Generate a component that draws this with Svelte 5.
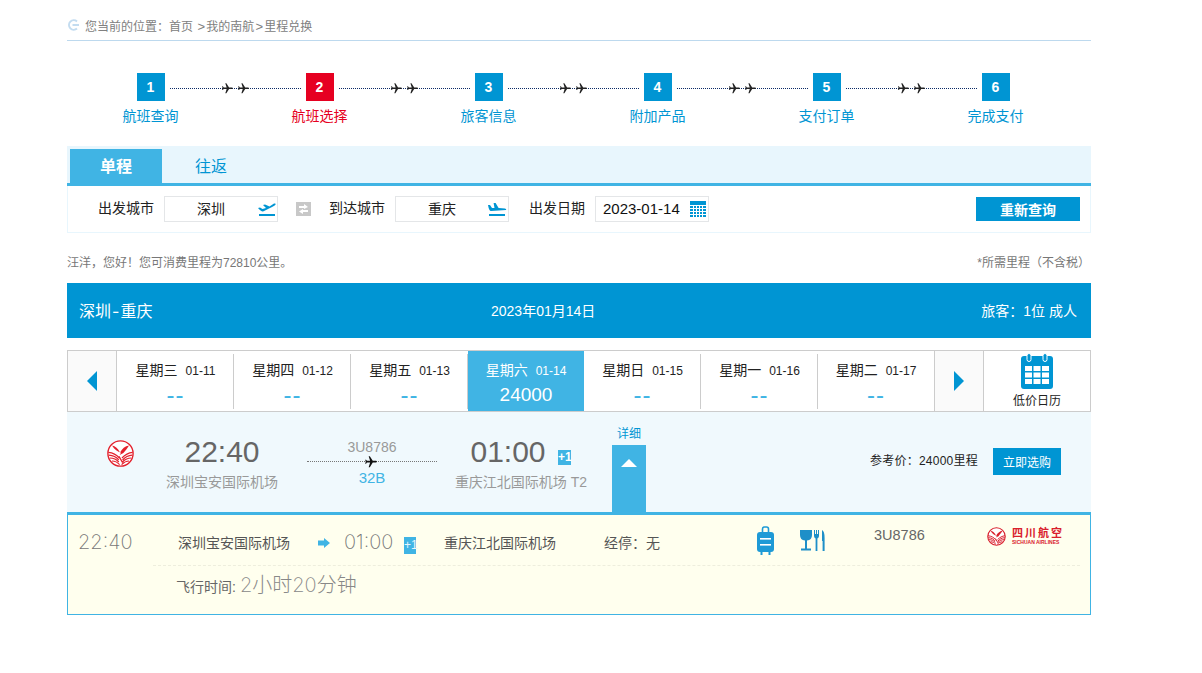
<script>
	const steps = [
		{ n: 1, label: '航班查询' },
		{ n: 2, label: '航班选择', active: true },
		{ n: 3, label: '旅客信息' },
		{ n: 4, label: '附加产品' },
		{ n: 5, label: '支付订单' },
		{ n: 6, label: '完成支付' }
	];
	const days = [
		{ week: '星期三', date: '01-11', price: '--' },
		{ week: '星期四', date: '01-12', price: '--' },
		{ week: '星期五', date: '01-13', price: '--' },
		{ week: '星期六', date: '01-14', price: '24000', active: true },
		{ week: '星期日', date: '01-15', price: '--' },
		{ week: '星期一', date: '01-16', price: '--' },
		{ week: '星期二', date: '01-17', price: '--' }
	];
	const plane = 'M21 16v-2l-8-5V3.5c0-.83-.67-1.5-1.5-1.5S10 2.67 10 3.5V9l-8 5v2l8-2.5V19l-2 1.5V22l3.5-1 3.5 1v-1.5L13 19v-5.5l8 2.5z';
	const birdWings = 'M5 5.5 C8.4 6 11 8.6 13 12.4 C15 8.8 18 6.2 22 5.5 C20.4 8.4 18.4 10.6 16.4 13 L12.6 15 L14 12.8 C10.8 12 7.4 9.4 5 5.5 Z';
	const birdStripes = 'M1.4 12.4 C6 12.8 9.6 14.8 12.4 18 M25.6 12.4 C21.6 12.8 18 14.8 15 18 M1.8 15.2 C6.2 15.4 9.4 17 11.8 20 M25.2 15.2 C21 15.4 18.2 17 15.6 20 M2.8 18 C6.8 18 9.6 19.4 11.8 22 M24.2 18 C20.4 18 18 19.4 15.4 22 M5 21 C8 21 10.4 22.2 12.6 24.6 M22 21 C19.4 21 17 22.2 14.6 24.6 M12 16.4 L15.6 22.6';
</script>

<div class="page">
	<div class="crumb">
		<svg class="crumb-icon" width="12" height="12" viewBox="0 0 12 12">
			<path d="M10 2.4 A4.8 4.8 0 1 0 10 9.6" fill="none" stroke="#c3dcf0" stroke-width="2" />
			<path d="M5.5 6 H12" stroke="#c3dcf0" stroke-width="2" />
		</svg>
		<span>您当前的位置：首页 <span class="gt">&gt;</span>我的南航<span class="gt">&gt;</span>里程兑换</span>
	</div>

	<div class="steps">
		{#each steps as step, i}
			<div class="step" class:active={step.active}>
				<div class="step-row">
					<div class="step-num">{step.n}</div>
					{#if i < steps.length - 1}
						<div class="step-line">
							<svg width="29" height="13" viewBox="0 0 54 24">
								<path d={plane} fill="#222" transform="rotate(90 12 12)" />
								<path d={plane} fill="#222" transform="translate(30 0) rotate(90 12 12)" />
							</svg>
						</div>
					{/if}
				</div>
				<div class="step-label">{step.label}</div>
			</div>
		{/each}
	</div>

	<div class="tabs">
		<div class="tab on">单程</div>
		<div class="tab">往返</div>
	</div>
	<div class="search">
		<span class="field-label first">出发城市</span>
		<div class="field city">
			<span>深圳</span>
			<svg width="18" height="14" viewBox="0 0 18 14">
				<path d="M0 6 L2 5.6 L4.5 7 L8 6 L5 3 L7 2.6 L11.5 4.6 L16 1.6 Q18 1 17.6 2.4 Q17 3.4 15 4.4 L5 9.4 Q3 9.6 0 6 Z" fill="#0095d3" />
				<rect x="1" y="12" width="16" height="2" fill="#0095d3" />
			</svg>
		</div>
		<div class="swap">
			<svg width="15" height="14" viewBox="0 0 15 14">
				<rect width="15" height="14" fill="#c8c8c8" />
				<path d="M3 4 H8 V2 L12 5 L8 7 V6 H3 Z M12 8 H7 V7 L3 9.5 L7 12 V10 H12 Z" fill="#fff" />
			</svg>
		</div>
		<span class="field-label">到达城市</span>
		<div class="field city">
			<span>重庆</span>
			<svg width="19" height="14" viewBox="0 0 19 14">
				<path d="M0 3 L2 3 L4 6 L6.5 6 L5.6 1 L7.6 1 L10.6 6 L17 6.5 Q19 7 18 8 L3 9 Q1 9 0 3 Z" fill="#0095d3" />
				<rect x="1" y="12" width="16" height="2" fill="#0095d3" />
			</svg>
		</div>
		<span class="field-label date-label">出发日期</span>
		<div class="field date">
			<span>2023-01-14</span>
			<svg width="16" height="16" viewBox="0 0 16 16">
				<rect width="16" height="16" fill="#0095d3" />
				<g stroke="#fff" stroke-width="1">
					<path d="M0 4.5 H16 M0 7.5 H16 M0 10.5 H16 M0 13.5 H16 M3.5 4 V16 M6.5 4 V16 M9.5 4 V16 M12.5 4 V16" />
				</g>
			</svg>
		</div>
		<button class="requery">重新查询</button>
	</div>

	<div class="notice">
		<span>汪洋，您好！您可消费里程为72810公里。</span>
		<span>*所需里程（不含税）</span>
	</div>

	<div class="route-bar">
		<span class="route-name">深圳<span class="dash">-</span>重庆</span>
		<span>2023年01月14日</span>
		<span class="route-pax">旅客：1位 成人</span>
	</div>

	<div class="strip">
		<div class="arrow">
			<svg width="10" height="20" viewBox="0 0 10 20"><path d="M10 0 V20 L0 10 Z" fill="#0095d3" /></svg>
		</div>
		{#each days as day}
			<div class="day" class:active={day.active} class:empty={day.price === '--'}>
				<div class="day-top"><b>{day.week}</b><i>{day.date}</i></div>
				<div class="day-price">{day.price}</div>
			</div>
		{/each}
		<div class="arrow right">
			<svg width="10" height="20" viewBox="0 0 10 20"><path d="M0 0 V20 L10 10 Z" fill="#0095d3" /></svg>
		</div>
		<div class="cal">
			<svg width="32" height="36" viewBox="0 0 32 36">
				<path d="M3 3 H29 Q32 3 32 6 V33 Q32 36 29 36 H3 Q0 36 0 33 V6 Q0 3 3 3 Z" fill="#0095d3" />
				<rect x="6" y="0.5" width="4" height="8" rx="2" fill="#0095d3" stroke="#fff" stroke-width="1" />
				<rect x="22" y="0.5" width="4" height="8" rx="2" fill="#0095d3" stroke="#fff" stroke-width="1" />
				<g fill="#fff">
					<rect x="4" y="13" width="7" height="5" /><rect x="12.5" y="13" width="7" height="5" /><rect x="21" y="13" width="7" height="5" />
					<rect x="4" y="19.5" width="7" height="5" /><rect x="12.5" y="19.5" width="7" height="5" /><rect x="21" y="19.5" width="7" height="5" />
					<rect x="4" y="26" width="7" height="5" /><rect x="12.5" y="26" width="7" height="5" /><rect x="21" y="26" width="7" height="5" />
				</g>
			</svg>
			<span>低价日历</span>
		</div>
	</div>

	<div class="flight">
		<div class="logo">
			<svg width="27" height="27" viewBox="0 0 27 27">
				<circle cx="13.5" cy="13.5" r="12.6" fill="#fff" stroke="#e3202c" stroke-width="1.4" />
				<path d={birdWings} fill="#e3202c" />
				<path d={birdStripes} fill="none" stroke="#e3202c" stroke-width="1.2" />
			</svg>
		</div>
		<div class="endpoint dep">
			<div class="time">22:40</div>
			<div class="airport">深圳宝安国际机场</div>
		</div>
		<div class="mid">
			<div class="mid-no">3U8786</div>
			<div class="mid-line">
				<svg width="14" height="14" viewBox="0 0 24 24"><path d={plane} fill="#111" transform="rotate(90 12 12)" /></svg>
			</div>
			<div class="mid-type">32B</div>
		</div>
		<div class="endpoint arr">
			<div class="time">01:00<span class="plus">+1</span></div>
			<div class="airport">重庆江北国际机场 T2</div>
		</div>
		<div class="detail-toggle">
			<span>详细</span>
			<div class="toggle-box">
				<svg width="16" height="8" viewBox="0 0 16 8"><path d="M8 0 L16 8 H0 Z" fill="#fff" /></svg>
			</div>
		</div>
		<div class="price">参考价：24000里程</div>
		<button class="buy">立即选购</button>
	</div>

	<div class="detail">
		<div class="detail-row">
			<div class="d-dep">22:40</div>
			<div class="d-airport a1">深圳宝安国际机场</div>
			<svg class="d-arrow" width="12" height="10" viewBox="0 0 12 10"><path d="M0 2.4 H6 V0 L12 5 L6 10 V7.6 H0 Z" fill="#40b4e4" /></svg>
			<div class="d-arr">01:00</div>
			<span class="d-plus">+1</span>
			<div class="d-airport a2">重庆江北国际机场</div>
			<div class="d-stop">经停：无</div>
			<svg class="d-bag" width="19" height="30" viewBox="0 0 19 30">
				<path d="M6.5 6 V3 Q6.5 1 8.5 1 H10.5 Q12.5 1 12.5 3 V6" fill="none" stroke="#1e9ad6" stroke-width="1.6" />
				<rect x="1" y="6" width="17" height="20" rx="3" fill="#1e9ad6" />
				<rect x="4" y="12" width="11" height="1.6" fill="#fff" />
				<rect x="4" y="18" width="11" height="1.6" fill="#fff" />
				<rect x="4.5" y="26" width="2" height="3" fill="#1e9ad6" />
				<rect x="12.5" y="26" width="2" height="3" fill="#1e9ad6" />
			</svg>
			<svg class="d-meal" width="25" height="21" viewBox="0 0 25 21">
				<path d="M0 0 H12 V5 Q12 10 7 10.6 V18.6 H11 V20.6 H1 V18.6 H5 V10.6 Q0 10 0 5 Z" fill="#1e8fc8" />
				<path d="M14 0 H15 V4 H16 V0 H17 V4 H18 V0 H19 V6 Q19 8 17.4 8.4 V21 H15.6 V8.4 Q14 8 14 6 Z" fill="#1e8fc8" />
				<path d="M22 0 Q24.6 1 24.6 8 V21 H22.6 V11 H22 Z" fill="#1e8fc8" />
			</svg>
			<div class="d-no">3U8786</div>
			<div class="d-logo">
				<svg width="19" height="19" viewBox="0 0 27 27">
					<circle cx="13.5" cy="13.5" r="12.4" fill="#fff" stroke="#d9202c" stroke-width="1.6" />
					<path d={birdWings} fill="#d9202c" />
					<path d={birdStripes} fill="none" stroke="#d9202c" stroke-width="1.4" />
				</svg>
				<div class="d-logo-text">
					<span class="cn">四川航空</span>
					<span class="en">SICHUAN AIRLINES</span>
				</div>
			</div>
		</div>
		<div class="detail-dur">
			<span class="dur-label">飞行时间:</span>
			<span class="dur-val">2小时20分钟</span>
		</div>
	</div>
</div>

<style>
	:global(body) {
		margin: 0;
		background: #fff;
		font-family: "Liberation Sans", "Noto Sans CJK SC", sans-serif;
	}

	.page {
		width: 1024px;
		margin-left: 67px;
		height: 673px;
		font-size: 12px;
		color: #333;
	}

	.crumb {
		height: 30px;
		padding-top: 10px;
		border-bottom: 1px solid #bdd9ee;
		display: flex;
		align-items: center;
		color: #808080;
		font-size: 12px;
		gap: 6px;
	}

	.gt {
		display: inline-block;
		width: 10px;
		font-size: 13px;
		text-align: center;
	}

	.steps {
		display: flex;
		margin: 32px 0 0 -1px;
		height: 73px;
	}

	.step {
		width: 169px;
		text-align: center;
	}

	.step-row {
		position: relative;
		height: 28px;
	}

	.step-num {
		width: 28px;
		height: 28px;
		margin: 0 auto;
		background: #0095d3;
		color: #fff;
		font-size: 14px;
		font-weight: bold;
		line-height: 28px;
	}

	.step.active .step-num {
		background: #e60021;
	}

	.step-line {
		position: absolute;
		left: 104px;
		top: 15px;
		width: 131px;
		border-top: 1px dotted #0b2a66;
		display: flex;
		justify-content: center;
	}

	.step-line svg {
		margin-top: -7px;
	}

	.step-label {
		margin-top: 7px;
		font-size: 14px;
		line-height: 16px;
		color: #0095d3;
	}

	.step.active .step-label {
		color: #e60021;
	}

	.tabs {
		height: 34px;
		padding: 3px 0 0 3px;
		display: flex;
		background: #e8f6fd;
		border-bottom: 3px solid #40b4e4;
	}

	.tab {
		width: 98px;
		text-align: center;
		font-size: 16px;
		line-height: 35px;
		color: #0095d3;
	}

	.tab.on {
		width: 92px;
		background: #40b4e4;
		color: #fff;
		font-weight: bold;
	}

	.search {
		height: 47px;
		box-sizing: border-box;
		border: 1px solid #e8f6fd;
		border-top: 0;
		padding-bottom: 1px;
		display: flex;
		align-items: center;
		font-size: 14px;
		color: #222;
	}

	.field-label.first {
		margin-left: 30px;
	}

	.field-label {
		width: 57px;
		white-space: nowrap;
		margin-bottom: 3px;
	}

	.field {
		height: 26px;
		box-sizing: border-box;
		border: 1px solid #e4e6e8;
		display: flex;
		align-items: center;
		background: #fff;
		margin-left: 9px;
	}

	.city {
		width: 114px;
		padding: 0 0 0 32px;
		justify-content: space-between;
	}

	.city span {
		margin-bottom: 2px;
	}

	.city svg {
		margin-right: 1px;
	}

	.swap {
		width: 15px;
		height: 14px;
		margin: 0 18px 0 18px;
		line-height: 0;
	}

	.date-label {
		margin-left: 20px;
	}

	.date {
		width: 114px;
		padding-left: 7px;
		gap: 8px;
		font-size: 15px;
		color: #111;
		white-space: nowrap;
	}

	.date svg {
		flex: none;
		margin-left: auto;
		margin-right: 2px;
	}

	.requery {
		margin-left: auto;
		margin-right: 10px;
		width: 104px;
		height: 24px;
		border: 0;
		background: #0095d3;
		color: #fff;
		font: bold 14px "Liberation Sans", "Noto Sans CJK SC", sans-serif;
		padding: 0;
	}

	.notice {
		display: flex;
		justify-content: space-between;
		padding-right: 1px;
		margin-top: 22px;
		height: 28px;
		line-height: 16px;
		color: #777;
		font-size: 12px;
	}

	.route-bar {
		height: 53px;
		padding: 0 14px 2px 12px;
		background: #0095d3;
		color: #fff;
		display: grid;
		grid-template-columns: 412px auto 1fr;
		align-items: center;
		font-size: 14px;
	}

	.route-name {
		font-size: 16px;
	}

	.dash {
		font-family: Inter, sans-serif;
		padding: 0 1px;
	}

	.route-pax {
		text-align: right;
	}

	.strip {
		margin-top: 12px;
		height: 62px;
		box-sizing: border-box;
		border: 1px solid #ccc;
		display: flex;
		align-items: stretch;
	}

	.arrow {
		width: 48px;
		background: #fafafa;
		border-right: 1px solid #ccc;
		display: flex;
		align-items: center;
		justify-content: center;
	}

	.arrow.right {
		border-left: 1px solid #ccc;
	}

	.day {
		width: 117px;
		text-align: center;
		position: relative;
		color: #222;
	}

	.day:nth-last-child(3) {
		width: 116px;
	}

	.day:not(:nth-last-child(3)):not(.active)::after {
		content: '';
		position: absolute;
		right: 0;
		top: 3px;
		bottom: 2px;
		border-right: 1px solid #ccc;
	}

	.day.active {
		width: 116px;
		background: #40b4e4;
		color: #fff;
	}

	.day-top {
		margin-top: 9px;
		line-height: 20px;
		display: flex;
		justify-content: center;
		align-items: baseline;
		gap: 8px;
	}

	.day-top b {
		font-weight: normal;
		font-size: 14px;
	}

	.day-top i {
		font-style: normal;
		font-size: 12px;
	}

	.day-price {
		font-size: 20px;
		line-height: 24px;
		margin-top: 2px;
		color: #40b4e4;
	}

	.day.empty .day-price {
		font-size: 24px;
		letter-spacing: 1px;
	}

	.day.active .day-price {
		color: #fff;
		font-size: 19px;
	}

	.cal {
		flex: 1;
		display: flex;
		flex-direction: column;
		align-items: center;
		padding-top: 2px;
		font-size: 12px;
		color: #222;
		gap: 5px;
		line-height: 15px;
	}

	.flight {
		height: 100px;
		background: #f0f9fd;
		display: flex;
		align-items: flex-start;
	}

	.logo {
		width: 70px;
		padding: 28px 0 0 40px;
		box-sizing: border-box;
		line-height: 0;
	}

	.endpoint {
		text-align: center;
		padding-top: 21px;
	}

	.dep {
		width: 170px;
	}

	.arr {
		width: 168px;
	}

	.time {
		font-size: 30px;
		line-height: 38px;
		color: #666;
		position: relative;
	}

	.arr .time {
		padding-right: 26px;
	}

	.plus {
		position: absolute;
		left: 121px;
		top: 17px;
		width: 13px;
		height: 15px;
		background: #40b4e4;
		color: #fff;
		font-size: 12px;
		font-weight: bold;
		line-height: 15px;
	}

	.airport {
		font-size: 14px;
		line-height: 20px;
		color: #999;
		margin-top: 1px;
	}

	.mid {
		width: 130px;
		text-align: center;
		padding-top: 26px;
	}

	.mid-no {
		font-size: 14px;
		line-height: 18px;
		color: #999;
	}

	.mid-line {
		height: 0;
		border-top: 1px dotted #777;
		margin-top: 5px;
		display: flex;
		justify-content: center;
	}

	.mid-line svg {
		margin: -7px 0 0 -3px;
	}

	.mid-type {
		font-size: 15px;
		line-height: 18px;
		margin-top: 7px;
		color: #40b4e4;
	}

	.detail-toggle {
		width: 34px;
		margin-left: 7px;
		text-align: center;
		padding-top: 12px;
		color: #0095d3;
	}

	.detail-toggle span {
		display: block;
		line-height: 20px;
		white-space: nowrap;
		height: 21px;
	}

	.toggle-box {
		height: 67px;
		background: #40b4e4;
		padding-top: 14px;
		box-sizing: border-box;
		line-height: 0;
	}

	.price {
		margin: 39px 0 0 auto;
		line-height: 20px;
		color: #222;
		white-space: nowrap;
		letter-spacing: 0.25px;
	}

	.buy {
		margin: 36px 30px 0 15px;
		width: 68px;
		height: 27px;
		border: 0;
		padding: 0;
		background: #0095d3;
		color: #fff;
		font: 12px "Liberation Sans", "Noto Sans CJK SC", sans-serif;
	}

	.detail {
		height: 103px;
		box-sizing: border-box;
		border: 1px solid #40b4e4;
		border-top: 3px solid #40b4e4;
		background: #ffffee;
		padding-top: 1px;
	}

	.detail-row {
		height: 49px;
		margin: 0 10px 0 85px;
		border-bottom: 1px dashed #eeeedd;
		position: relative;
	}

	.detail-row > * {
		position: absolute;
	}

	.d-dep, .d-arr {
		top: 14px;
		font: 200 20px/24px Inter, "Liberation Sans", sans-serif;
		color: #777;
	}

	.d-dep {
		left: -75px;
	}

	.d-airport, .d-stop {
		top: 17px;
		font-size: 14px;
		line-height: 20px;
		color: #555;
		white-space: nowrap;
	}

	.a1 { left: 25px; }
	.a2 { left: 291px; }
	.d-stop { left: 451px; }

	.d-arrow {
		left: 165px;
		top: 22px;
	}

	.d-arr {
		left: 191px;
	}

	.d-plus {
		left: 251px;
		top: 21px;
		width: 12px;
		height: 17px;
		background: #40b4e4;
		color: #e8f5fc;
		font-size: 12px;
		line-height: 17px;
		text-align: center;
	}

	.d-bag {
		left: 603px;
		top: 10px;
	}

	.d-meal {
		left: 647px;
		top: 14px;
	}

	.d-no {
		left: 721px;
		top: 10px;
		font-size: 14.5px;
		line-height: 18px;
		color: #666;
	}

	.d-logo {
		left: 834px;
		top: 11px;
		display: flex;
		gap: 6px;
	}

	.d-logo-text {
		display: flex;
		flex-direction: column;
		color: #d9202c;
		width: 50px;
	}

	.d-logo-text .cn {
		font-size: 11px;
		font-weight: bold;
		line-height: 12px;
		letter-spacing: 2px;
		white-space: nowrap;
	}

	.d-logo-text .en {
		font-size: 5px;
		line-height: 6px;
		font-weight: bold;
		white-space: nowrap;
	}

	.detail-dur {
		margin: 3px 0 0 108px;
		display: flex;
		align-items: baseline;
		gap: 4px;
	}

	.dur-label {
		font-size: 14px;
		color: #666;
	}

	.dur-val {
		font: 200 20px Inter, "Noto Sans CJK SC", sans-serif;
		color: #888;
	}
</style>
